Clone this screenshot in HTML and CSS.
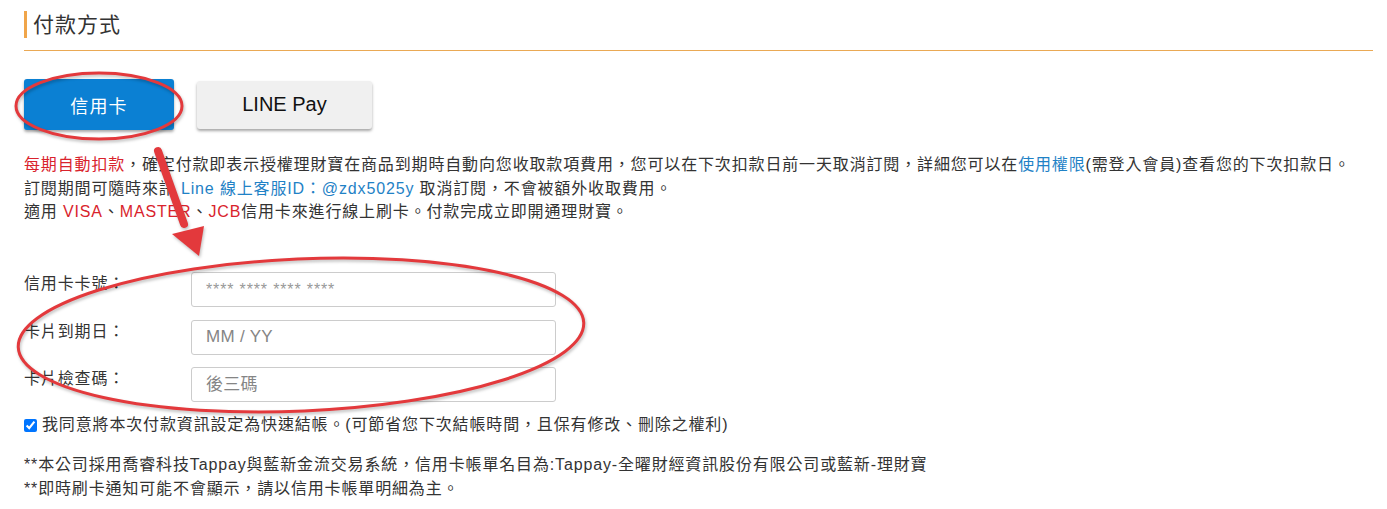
FILE: index.html
```html
<!DOCTYPE html>
<html lang="zh-Hant">
<head>
<meta charset="utf-8">
<title>付款方式</title>
<link rel="stylesheet" href="styles.css">
</head>
<body>
<div class="page">
  <div class="section-head">
    <h2 class="title">付款方式</h2>
  </div>

  <div class="tabs">
    <button class="tab tab-active" type="button">信用卡</button>
    <button class="tab tab-line" type="button">LINE Pay</button>
  </div>

  <div class="notice">
    <div><span class="red">每期自動扣款</span>，確定付款即表示授權理財寶在商品到期時自動向您收取款項費用，您可以在下次扣款日前一天取消訂閱，詳細您可以在<a class="link">使用權限</a>(需登入會員)查看您的下次扣款日。</div>
    <div>訂閱期間可隨時來訊 <a class="link">Line 線上客服ID：@zdx5025y</a> 取消訂閱，不會被額外收取費用。</div>
    <div>適用 <span class="red">VISA</span>、<span class="red">MASTER</span>、<span class="red">JCB</span>信用卡來進行線上刷卡。付款完成立即開通理財寶。</div>
  </div>

  <form class="card-form">
    <div class="row">
      <label class="label">信用卡卡號：</label>
      <input class="field field-num" type="text" placeholder="**** **** **** ****">
    </div>
    <div class="row">
      <label class="label">卡片到期日：</label>
      <input class="field" type="text" placeholder="MM / YY">
    </div>
    <div class="row">
      <label class="label">卡片檢查碼：</label>
      <input class="field" type="text" placeholder="後三碼">
    </div>
  </form>

  <label class="agree"><input class="check" type="checkbox" checked> 我同意將本次付款資訊設定為快速結帳。(可節省您下次結帳時間，且保有修改、刪除之權利)</label>

  <div class="notes">
    <div>**本公司採用喬睿科技Tappay與藍新金流交易系統，信用卡帳單名目為:Tappay-全曜財經資訊股份有限公司或藍新-理財寶</div>
    <div>**即時刷卡通知可能不會顯示，請以信用卡帳單明細為主。</div>
  </div>

  <svg class="annot" width="1387" height="509" viewBox="0 0 1387 509" xmlns="http://www.w3.org/2000/svg">
    <ellipse cx="99" cy="106" rx="83" ry="33" fill="none" stroke="#e3393c" stroke-width="3"/>
    <ellipse cx="301" cy="335" rx="283" ry="76" transform="rotate(-2.5 301 335)" fill="none" stroke="#e3393c" stroke-width="3"/>
    <line x1="158" y1="151" x2="184" y2="224" stroke="#e3393c" stroke-width="8" stroke-linecap="round"/>
    <polygon points="172,234 204,226 199,256" fill="#e3393c"/>
  </svg>
</div>
</body>
</html>
```

FILE: styles.css
```css
* { box-sizing: border-box; }

html, body {
  margin: 0;
  padding: 0;
  background: #ffffff;
}

body {
  font-family: "Liberation Sans", "Noto Sans CJK TC", Arial, sans-serif;
  color: #333333;
  font-size: 16px;
  letter-spacing: 0.85px;
}

.page {
  position: relative;
  width: 1387px;
  height: 509px;
  padding: 0 14px 0 24px;
  overflow: hidden;
}

.section-head {
  padding: 11px 0 12px;
  border-bottom: 1.5px solid #eaa955;
}

.title {
  margin: 0;
  padding-left: 6px;
  border-left: 3px solid #f0a54a;
  font-size: 21px;
  line-height: 27px;
  font-weight: normal;
  letter-spacing: 1px;
  color: #333333;
}

.tabs {
  display: flex;
  align-items: center;
  gap: 23px;
  margin-top: 28px;
}

.tab {
  font-family: "Liberation Sans", "Noto Sans CJK TC", Arial, sans-serif;
  border: none;
  border-radius: 3px;
  cursor: pointer;
}

.tab-active {
  width: 150px;
  height: 51px;
  background: #0b80d3;
  color: #ffffff;
  font-size: 18px;
  letter-spacing: 1.2px;
  box-shadow: 0 2px 3px rgba(0, 0, 0, 0.35);
}

.tab-line {
  width: 175px;
  height: 48px;
  background: #f0f0f0;
  color: #111111;
  font-size: 20px;
  letter-spacing: 0;
  box-shadow: 0 2px 3px rgba(0, 0, 0, 0.35);
}

.notice {
  margin-top: 23px;
  line-height: 23.5px;
}

.red { color: #d9232c; }

.link {
  color: #1f82c6;
  text-decoration: none;
}

.card-form {
  margin: 48.5px 0 0;
  display: flex;
  flex-direction: column;
  gap: 12.5px;
}

.row {
  display: flex;
  align-items: flex-start;
}

.label {
  width: 167px;
  line-height: 24px;
}

.field {
  width: 365px;
  height: 35px;
  border: 1px solid #cccccc;
  border-radius: 3px;
  padding: 0 14px;
  font-family: "Liberation Sans", "Noto Sans CJK TC", Arial, sans-serif;
  font-size: 17px;
  letter-spacing: 0.3px;
  color: #333333;
  background: #ffffff;
}

.field::placeholder { color: #858585; }

.field-num { font-size: 16px; letter-spacing: 0.85px; }

.field-num::placeholder { color: #999999; }

.agree {
  display: flex;
  align-items: center;
  margin-top: 11px;
  line-height: 24px;
  white-space: nowrap;
}

.check {
  width: 13px;
  height: 13px;
  margin: 0 5px 0 0;
  accent-color: #0075ff;
}

.notes {
  margin-top: 16px;
  line-height: 24px;
}

.annot {
  position: absolute;
  left: 0;
  top: 0;
  pointer-events: none;
  filter: drop-shadow(1px 2px 1.5px rgba(0, 0, 0, 0.25));
}
```
